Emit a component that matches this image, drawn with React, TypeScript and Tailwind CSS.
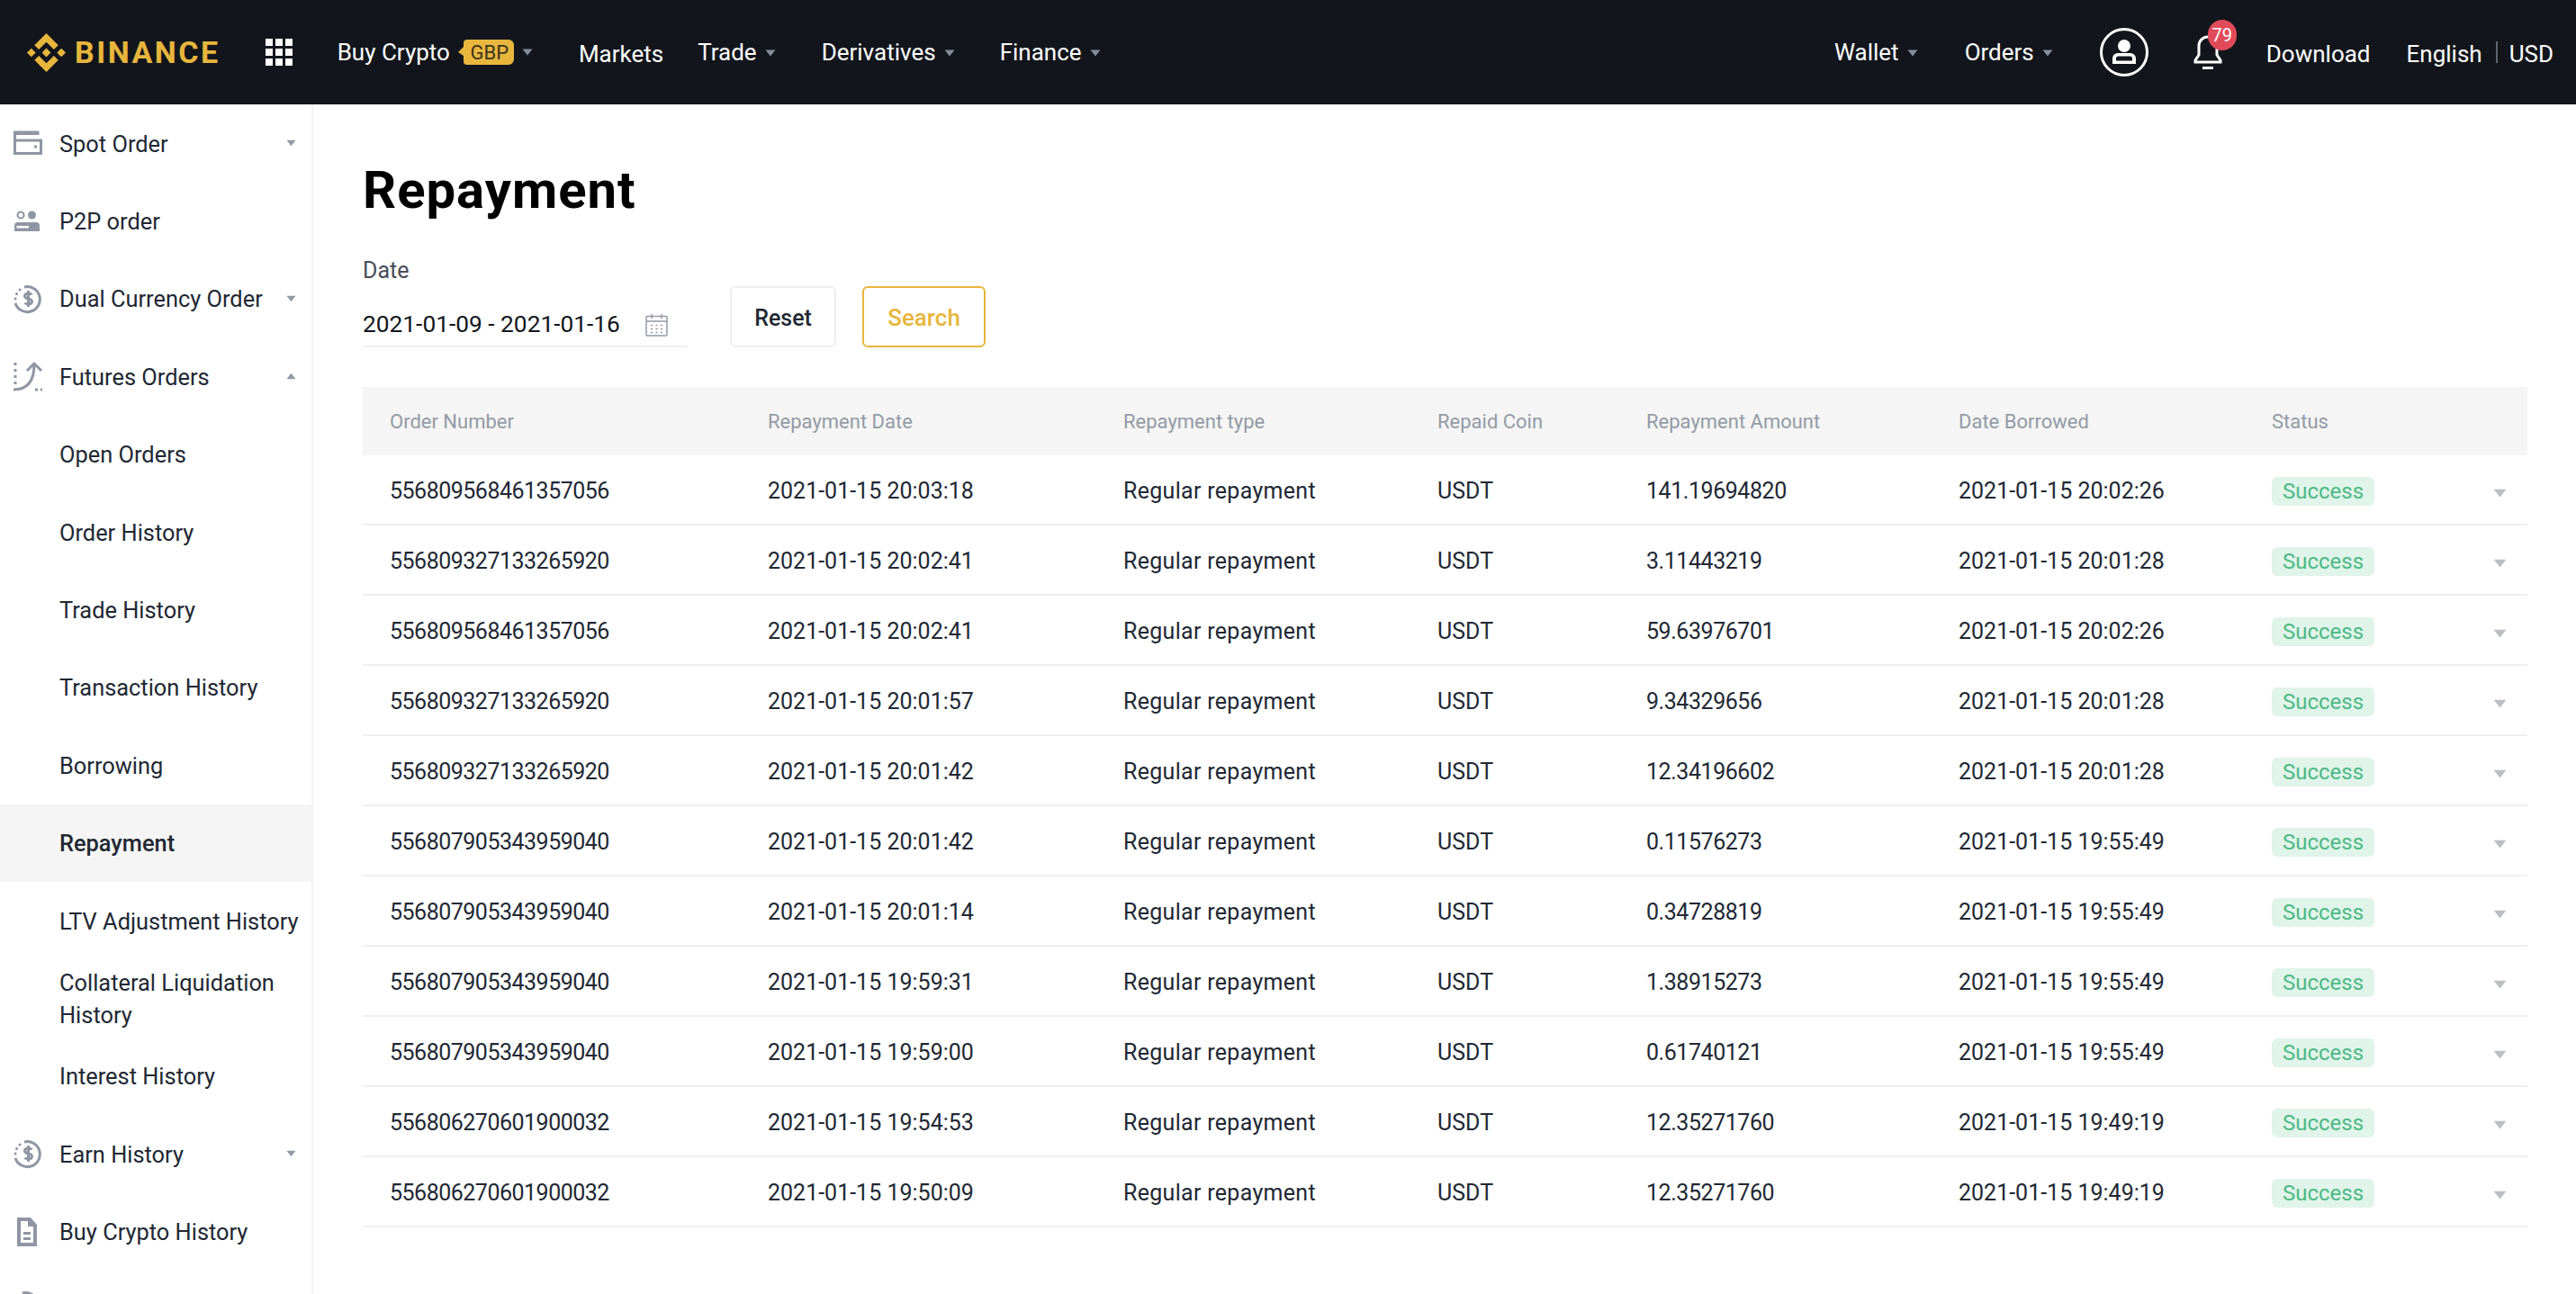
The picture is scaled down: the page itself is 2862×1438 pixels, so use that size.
import { type ReactNode } from "react";

const cols = "grid grid-cols-[450px_395px_349px_232px_347px_348px_1fr] items-center";

const rows = [
  ["556809568461357056", "2021-01-15 20:03:18", "141.19694820", "2021-01-15 20:02:26"],
  ["556809327133265920", "2021-01-15 20:02:41", "3.11443219", "2021-01-15 20:01:28"],
  ["556809568461357056", "2021-01-15 20:02:41", "59.63976701", "2021-01-15 20:02:26"],
  ["556809327133265920", "2021-01-15 20:01:57", "9.34329656", "2021-01-15 20:01:28"],
  ["556809327133265920", "2021-01-15 20:01:42", "12.34196602", "2021-01-15 20:01:28"],
  ["556807905343959040", "2021-01-15 20:01:42", "0.11576273", "2021-01-15 19:55:49"],
  ["556807905343959040", "2021-01-15 20:01:14", "0.34728819", "2021-01-15 19:55:49"],
  ["556807905343959040", "2021-01-15 19:59:31", "1.38915273", "2021-01-15 19:55:49"],
  ["556807905343959040", "2021-01-15 19:59:00", "0.61740121", "2021-01-15 19:55:49"],
  ["556806270601900032", "2021-01-15 19:54:53", "12.35271760", "2021-01-15 19:49:19"],
  ["556806270601900032", "2021-01-15 19:50:09", "12.35271760", "2021-01-15 19:49:19"],
];

function Caret({ up, className }: { up?: boolean; className?: string }) {
  return (
    <svg viewBox="0 0 12 8" className={className} fill="currentColor">
      <path d={up ? "M6 0.5L11.5 7.5H0.5Z" : "M0.5 0.5H11.5L6 7.5Z"} />
    </svg>
  );
}

function NavItem({ label, className }: { label: string; className?: string }) {
  return (
    <div className={"flex items-center " + (className ?? "")}>
      <span>{label}</span>
      <Caret className="ml-[9px] mt-[1px] h-[8px] w-[12px] text-[#848E9C]" />
    </div>
  );
}

function BinanceLogo() {
  return (
    <div className="flex items-center">
      <svg viewBox="0 0 126.61 126.61" className="h-[43px] w-[43px]" fill="#E8B63D">
        <polygon points="38.73 53.2 63.3 28.63 87.89 53.21 102.19 38.91 63.3 0 24.42 38.9" />
        <polygon points="0 63.31 14.3 49.01 28.6 63.31 14.3 77.6" />
        <polygon points="38.73 73.41 63.3 97.98 87.89 73.4 102.2 87.69 63.3 126.61 24.42 87.72 24.4 87.7" />
        <polygon points="98.01 63.31 112.31 49.01 126.61 63.3 112.31 77.61" />
        <polygon points="77.81 63.3 63.3 48.79 52.57 59.51 51.33 60.75 48.79 63.29 48.79 63.31 63.3 77.82 77.81 63.3" />
      </svg>
      <span className="ml-[10px] text-[34px] font-bold tracking-[2.5px] text-[#E8B63D]">BINANCE</span>
    </div>
  );
}

function AppsIcon() {
  return (
    <div className="ml-[50px] grid grid-cols-3 gap-[3px]">
      {Array.from({ length: 9 }).map((_, i) => (
        <div key={i} className="h-[8px] w-[8px] bg-white" />
      ))}
    </div>
  );
}

function Header() {
  return (
    <header className="flex h-[116px] shrink-0 items-center justify-between bg-[#12161C] pl-[30px] pr-[25px] text-[26px] text-white">
      <div className="flex items-center">
        <BinanceLogo />
        <AppsIcon />
        <div className="ml-[50px] flex items-center">
          <span>Buy Crypto</span>
          <svg viewBox="0 0 62 28" className="ml-[9px] h-[28px] w-[62px]">
            <path d="M6 4a4 4 0 0 1 4-4h46a6 6 0 0 1 6 6v16a6 6 0 0 1-6 6H10a4 4 0 0 1-4-4v-6L0 14l6-6Z" fill="#E8B63D" />
          </svg>
          <span className="-ml-[54px] w-[54px] text-center text-[22px] text-[#3a3420]">GBP</span>
          <Caret className="ml-[9px] h-[8px] w-[12px] text-[#848E9C]" />
        </div>
        <span className="ml-[51px] mt-[4px]">Markets</span>
        <NavItem label="Trade" className="ml-[38px]" />
        <NavItem label="Derivatives" className="ml-[51px]" />
        <NavItem label="Finance" className="ml-[50px]" />
      </div>
      <div className="flex items-center">
        <NavItem label="Wallet" />
        <NavItem label="Orders" className="ml-[52px]" />
        <svg viewBox="0 0 54 54" className="ml-[52px] h-[54px] w-[54px]" fill="none">
          <circle cx="27" cy="27" r="25.5" stroke="white" strokeWidth="3" />
          <circle cx="27" cy="20" r="5.5" stroke="white" strokeWidth="3" fill="white" />
          <path d="M14 40v-6a6 6 0 0 1 6-6h14a6 6 0 0 1 6 6v6Z" fill="white" />
          <path d="M18 36.500v-2.500a2.500 2.500 0 0 1 2.500-2.500h13a2.500 2.500 0 0 1 2.500 2.500v2.500Z" fill="#12161C" />
        </svg>
        <div className="relative ml-[50px] h-[40px] w-[32px]">
          <svg viewBox="0 0 32 40" className="h-[40px] w-[32px]" fill="none" stroke="white" strokeWidth="3">
            <path d="M16 3a10 10 0 0 0-10 10v10l-4 6v2h28v-2l-4-6V13a10 10 0 0 0-10-10Z" />
            <path d="M10 37.500h12" />
          </svg>
          <div className="absolute -top-[16px] left-[16px] flex h-[34px] w-[32px] items-center justify-center rounded-full bg-[#E04A59] text-[20px] text-white">79</div>
        </div>
        <span className="ml-[49px] mt-[4px]">Download</span>
        <span className="ml-[40px] mt-[4px]">English</span>
        <div className="ml-[15px] mr-[13px] h-[24px] w-[2px] bg-[#5E6673]" />
        <span className="mt-[4px]">USD</span>
      </div>
    </header>
  );
}

const ic = "h-[34px] w-[34px] text-[#8F96A3]";

function WalletIcon() {
  return (
    <svg viewBox="0 0 34 34" className={ic} fill="none" stroke="currentColor" strokeWidth="3">
      <path d="M2.500 6.500h27M2.500 14h29v14.500h-29V5h27" />
      <path d="M24 21h3" />
    </svg>
  );
}

function PeopleIcon() {
  return (
    <svg viewBox="0 0 34 34" className={ic} fill="currentColor">
      <circle cx="9" cy="10" r="3.500" fill="none" stroke="currentColor" strokeWidth="2" />
      <circle cx="21.500" cy="10" r="4.500" />
      <path fillRule="evenodd" d="M2 22a4 4 0 0 1 4-4h20a4 4 0 0 1 4 4v6H2Zm2.500 0v2.500h13.500V22Z" />
    </svg>
  );
}

function DollarIcon() {
  return (
    <svg viewBox="0 0 34 34" className={ic} fill="none" stroke="currentColor">
      <path d="M13 4a14 14 0 1 1-10 18" strokeWidth="3" />
      <path d="M3 17h.1M4.500 11.500h.1M8 7h.1" strokeWidth="3" strokeLinecap="round" />
      <path d="M21.500 12.500c-1-1.500-8-2.500-8 1.500s8 2 8 6-7 3-8 1.500M17.500 8v18" strokeWidth="3" />
    </svg>
  );
}

function FuturesIcon() {
  return (
    <svg viewBox="0 0 34 34" className={ic} fill="none" stroke="currentColor" strokeWidth="3">
      <path d="M1 32c12 0 23-6 23-28" />
      <path d="M16 11l8-8 8 8" />
      <path d="M3 2v27" strokeDasharray="3 4" />
      <path d="M25 32h8" strokeDasharray="3 3" />
    </svg>
  );
}

function DocIcon() {
  return (
    <svg viewBox="0 0 34 34" className={ic} fill="currentColor">
      <path fillRule="evenodd" d="M5 1h15l7 8v24H5Zm4 4v24h14V11h-6V5Zm3 12h8v3h-8Zm0 6h8v3h-8Z" />
    </svg>
  );
}

function SideItem({ icon, label, caret, active, sub }: { icon?: ReactNode; label: string; caret?: "up" | "down"; active?: boolean; sub?: boolean }) {
  return (
    <div className={"flex h-[86.4px] shrink-0 items-center " + (active ? "bg-[#F5F5F5] font-medium" : "")}>
      <div className={"flex w-[66px] shrink-0 justify-center " + (sub ? "" : "pr-[5px]")}>{icon}</div>
      <span className="flex-1 whitespace-pre-line pt-[1px] leading-[36px]">{label}</span>
      {caret && <Caret up={caret === "up"} className="mr-[17px] h-[8px] w-[11px] text-[#929AA5]" />}
    </div>
  );
}

function Sidebar() {
  return (
    <aside className="flex w-[348px] shrink-0 flex-col overflow-hidden border-r-2 border-[#F3F3F3] text-[25.4px] text-[#212833]">
      <SideItem icon={<WalletIcon />} label="Spot Order" caret="down" />
      <SideItem icon={<PeopleIcon />} label="P2P order" />
      <SideItem icon={<DollarIcon />} label="Dual Currency Order" caret="down" />
      <SideItem icon={<FuturesIcon />} label="Futures Orders" caret="up" />
      <SideItem label="Open Orders" sub />
      <SideItem label="Order History" sub />
      <SideItem label="Trade History" sub />
      <SideItem label="Transaction History" sub />
      <SideItem label="Borrowing" sub />
      <SideItem label="Repayment" sub active />
      <SideItem label="LTV Adjustment History" sub />
      <SideItem label={"Collateral Liquidation\nHistory"} sub />
      <SideItem label="Interest History" sub />
      <SideItem icon={<DollarIcon />} label="Earn History" caret="down" />
      <SideItem icon={<DocIcon />} label="Buy Crypto History" />
      <div className="flex h-[86.4px] shrink-0 pl-[12px] pt-[21px]">
        <DollarIcon />
      </div>
    </aside>
  );
}

function Table() {
  return (
    <div className="mt-[44px] text-[25px] text-[#212833]">
      <div className={cols + " h-[76px] bg-[#F5F5F5] text-[22px] text-[#929AA5]"}>
        <span className="pl-[30px]">Order Number</span>
        <span>Repayment Date</span>
        <span>Repayment type</span>
        <span>Repaid Coin</span>
        <span>Repayment Amount</span>
        <span>Date Borrowed</span>
        <span>Status</span>
      </div>
      {rows.map((r, i) => (
        <div key={i} className={cols + " h-[78px] border-b-2 border-[#EEEFF1] pt-[4px]"}>
          <span className="pl-[30px] tracking-[-0.5px]">{r[0]}</span>
          <span>{r[1]}</span>
          <span className="tracking-[0.3px]">Regular repayment</span>
          <span>USDT</span>
          <span className="tracking-[-0.45px]">{r[2]}</span>
          <span>{r[3]}</span>
          <div className="flex items-center justify-between pr-[23px]">
            <span className="flex h-[32px] w-[114px] items-center justify-center rounded-[6px] bg-[#E0F4E9] text-[24px] text-[#4CB985]">Success</span>
            <Caret className="mt-[3px] h-[10px] w-[15px] text-[#BBBFC4]" />
          </div>
        </div>
      ))}
    </div>
  );
}

export default function App() {
  return (
    <div className="flex h-[1438px] flex-col overflow-hidden bg-white [font-family:Roboto,sans-serif]">
      <Header />
      <div className="flex min-h-0 flex-1">
        <Sidebar />
        <main className="flex-1 pl-[55px] pr-[54px] pt-[63px]">
          <h1 className="text-[58px] font-bold leading-[64px] tracking-[1px] text-black">Repayment</h1>
          <div className="mt-[42px] flex items-end">
            <div className="w-[361px]">
              <div className="text-[25px] leading-[32px] text-[#474D57]">Date</div>
              <div className="mt-[21px] flex h-[48px] items-center justify-between border-b-2 border-[#EEEFF1] pr-[22px] text-[26.3px] text-[#12161C]">
                <span>2021-01-09 - 2021-01-16</span>
                <svg viewBox="0 0 25 26" className="h-[26px] w-[25px] text-[#929AA5]" fill="none" stroke="currentColor" strokeWidth="1.500">
                  <rect x="1" y="3.500" width="23" height="21.500" rx="1" />
                  <path d="M1 9h23M7 1v5M18 1v5" />
                  <path d="M6 13.500h2M11.500 13.500h2M17 13.500h2M6 17.500h2M11.500 17.500h2M17 17.500h2M6 21.500h2M11.500 21.500h2M17 21.500h2" />
                </svg>
              </div>
            </div>
            <button className="ml-[47px] h-[68px] w-[118px] rounded-[6px] border-2 border-[#EEEFF1] pt-[3px] text-[25px] font-medium text-[#212833]">Reset</button>
            <button className="ml-[29px] h-[68px] w-[137px] rounded-[6px] border-2 border-[#E8B63D] pt-[3px] text-[26px] font-medium text-[#E8B63D]">Search</button>
          </div>
          <Table />
        </main>
      </div>
    </div>
  );
}
